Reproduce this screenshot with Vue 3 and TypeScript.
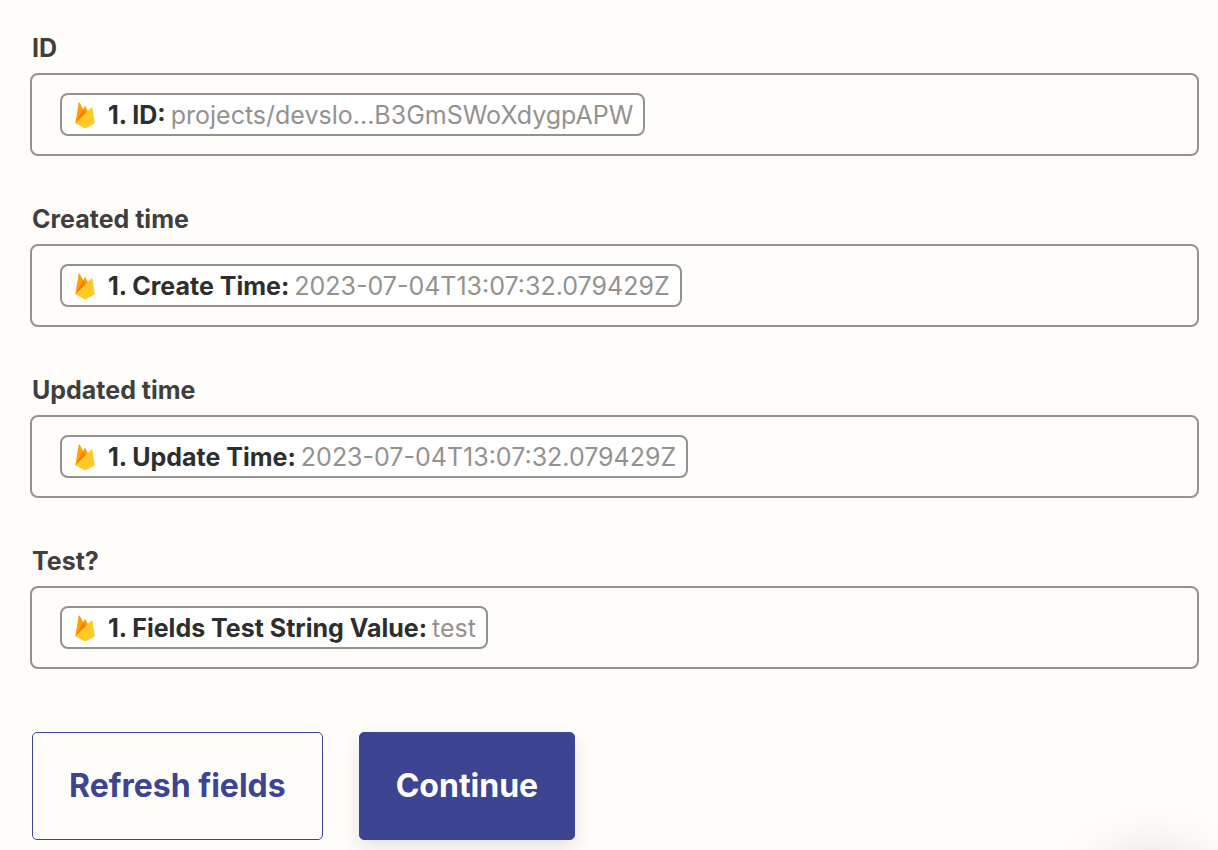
<script setup lang="ts">
interface MappedField {
  id: string
  label: string
  source: string
  value: string
}

const fields: MappedField[] = [
  { id: 'id', label: 'ID', source: '1. ID:', value: 'projects/devslo...B3GmSWoXdygpAPW' },
  { id: 'created-time', label: 'Created time', source: '1. Create Time:', value: '2023-07-04T13:07:32.079429Z' },
  { id: 'updated-time', label: 'Updated time', source: '1. Update Time:', value: '2023-07-04T13:07:32.079429Z' },
  { id: 'test', label: 'Test?', source: '1. Fields Test String Value:', value: 'test' },
]
</script>

<template>
  <form class="form" @submit.prevent>
    <div v-for="field in fields" :key="field.id" class="field">
      <label class="label" :for="field.id">{{ field.label }}</label>
      <div class="box">
        <span class="pill">
          <svg class="flame" viewBox="0 0 20 27" aria-hidden="true">
            <path d="M0.4 21.2 3.6 0.9c.1-.6.8-.7 1.1-.2l3.5 6.5 1.4-2.7c.2-.4.8-.4 1 0l8.2 16.7z" fill="#ffa000" />
            <path d="M12 13 8.2 7.2.4 21.2z" fill="#f57c00" />
            <path d="m.4 21.2 16-15.6c.4-.4 1-.2 1.1.4l2.3 15.2-8.5 4.9c-.7.4-1.5.4-2.2 0z" fill="#ffca28" />
          </svg>
          <span class="source">{{ field.source }}</span>
          <span class="value">{{ field.value }}</span>
        </span>
        <input :id="field.id" class="entry" type="text" autocomplete="off" />
      </div>
    </div>
    <div class="actions">
      <button class="button secondary" type="button">Refresh fields</button>
      <button class="button primary" type="submit">Continue</button>
    </div>
  </form>
  <div class="launcher" aria-hidden="true"></div>
</template>

<style>
body {
  background: #fffdf9;
}
</style>

<style scoped>
.form {
  display: flex;
  flex-direction: column;
  gap: 44px;
  padding: 29px 19px 10px 30px;
  font-family: Inter, "Liberation Sans", sans-serif;
  font-size: 25px;
  line-height: 38px;
}

.field {
  display: flex;
  flex-direction: column;
  gap: 6px;
}

.label {
  padding-left: 2px;
  color: #403f3e;
  font-weight: 700;
}

.box {
  display: flex;
  align-items: center;
  gap: 8px;
  padding: 18px 28px;
  border: 2px solid #93928e;
  border-radius: 8px;
}

.pill {
  display: flex;
  align-items: center;
  flex: none;
  padding: 1px 10px 0 13px;
  border: 2px solid #93928e;
  border-radius: 8px;
  background: #fff;
  line-height: 38px;
  white-space: nowrap;
}

.flame {
  width: 20px;
  height: 27px;
  margin-right: 13px;
}

.source {
  margin-right: 5px;
  color: #2d2e2e;
  font-weight: 700;
}

.value {
  color: #93928e;
}

.entry {
  flex: 1;
  min-width: 0;
  height: 38px;
  padding: 0;
  border: 0;
  outline: 0;
  background: transparent;
  color: #2d2e2e;
  font: inherit;
}

.actions {
  display: flex;
  gap: 36px;
  padding: 19px 0 0 2px;
}

.button {
  padding: 32px 36px;
  border: 1px solid #3d4592;
  border-radius: 5px;
  font: 700 32px/42px Inter, "Liberation Sans", sans-serif;
  cursor: pointer;
}

.secondary {
  background: transparent;
  color: #3d4592;
}

.primary {
  background: #3d4592;
  color: #fffdf9;
  box-shadow: 0 8px 20px rgba(0, 0, 0, 0.1);
}

.launcher {
  position: fixed;
  right: 9px;
  bottom: -120px;
  width: 112px;
  height: 112px;
  border-radius: 50%;
  background: #3d4592;
  box-shadow: 0 4px 64px rgba(0, 0, 0, 0.2);
}
</style>
